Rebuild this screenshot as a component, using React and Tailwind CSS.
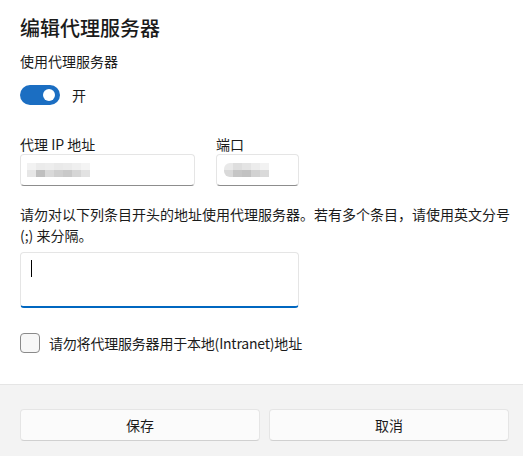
import React from "react";

const IP_BLOCKS = [
  ["#f2f2f2", "#ebebeb", "#ededed", "#e9e9e9", "#ebebeb", "#efefef", "#f4f4f4"],
  ["#e6e6e6", "#bfbfbf", "#d9d9d9", "#cfcfcf", "#c9c9c9", "#d6d6d6", "#e2e2e2"],
];

const PORT_BLOCKS = [
  ["#e9e9e9", "#dedede", "#e4e4e4", "#ececec", "#f2f2f2"],
  ["#d9d9d9", "#c6c6c6", "#c2c2c2", "#d2d2d2", "#dadada"],
];

function Blur({ rows, rounded }) {
  return (
    <div className={`flex flex-col overflow-hidden ${rounded ? "rounded-l-[6px]" : ""}`}>
      {rows.map((row, r) => (
        <div key={r} className="flex">
          {row.map((c, i) => (
            <div key={i} className="w-[9px] h-[7px]" style={{ backgroundColor: c }} />
          ))}
        </div>
      ))}
    </div>
  );
}

export default function App() {
  return (
    <div
      className="w-[523px] h-[456px] bg-white flex flex-col text-[#1b1b1b]"
      style={{ fontFamily: '"Noto Sans CJK SC", "Noto Sans", sans-serif' }}
    >
      <div className="flex-1 pl-5 pt-[14px]">
        <h1 className="text-[20px] leading-[28px] font-medium">编辑代理服务器</h1>

        <div className="mt-[9px] text-[14px] leading-[20px]">使用代理服务器</div>

        <div className="mt-[14px] flex items-center gap-3">
          <div className="w-10 h-5 rounded-full bg-[#1b6ec2] flex items-center justify-end pr-[5px]">
            <div className="w-3 h-3 rounded-full bg-white" />
          </div>
          <span className="text-[14px] leading-[20px]">开</span>
        </div>

        <div className="mt-[29px] flex gap-[21px]">
          <div className="w-[175px]">
            <div className="text-[14px] leading-[20px]">代理 IP 地址</div>
            <div className="h-8 rounded-[4px] border border-[#e5e5e5] border-b-[#8d8d8d] bg-white flex items-center pl-[6px]">
              <Blur rows={IP_BLOCKS} />
            </div>
          </div>
          <div className="w-[83px]">
            <div className="text-[14px] leading-[20px]">端口</div>
            <div className="h-8 rounded-[4px] border border-[#e5e5e5] border-b-[#8d8d8d] bg-white flex items-center pl-[7px]">
              <Blur rows={PORT_BLOCKS} rounded />
            </div>
          </div>
        </div>

        <p className="mt-[18px] text-[14px] leading-[21px] w-[496px]">
          请勿对以下列条目开头的地址使用代理服务器。若有多个条目，请使用英文分号 (;) 来分隔。
        </p>

        <div className="mt-[6px] w-[279px] h-14 rounded-[4px] border border-[#e5e5e5] border-b-2 border-b-[#0067c0] bg-white pl-[10px] pt-[7px]">
          <div className="w-px h-[17px] bg-black" />
        </div>

        <label className="mt-[25px] flex items-center gap-[9px] text-[14px] leading-[20px] tracking-[-0.2px]">
          <span className="w-5 h-5 rounded-[4px] border border-[#8a8a8a] bg-[#f7f7f7]" />
          请勿将代理服务器用于本地(Intranet)地址
        </label>
      </div>

      <div className="h-[72px] bg-[#f3f3f3] border-t border-[#e5e5e5] pt-6 pl-5 pr-[14px] grid grid-cols-2 gap-[9px]">
        <button className="h-8 rounded-[4px] border border-[#e5e5e5] border-b-[#d0d0d0] bg-[#fbfbfb] text-[14px]">
          保存
        </button>
        <button className="h-8 rounded-[4px] border border-[#e5e5e5] border-b-[#d0d0d0] bg-[#fbfbfb] text-[14px]">
          取消
        </button>
      </div>
    </div>
  );
}
